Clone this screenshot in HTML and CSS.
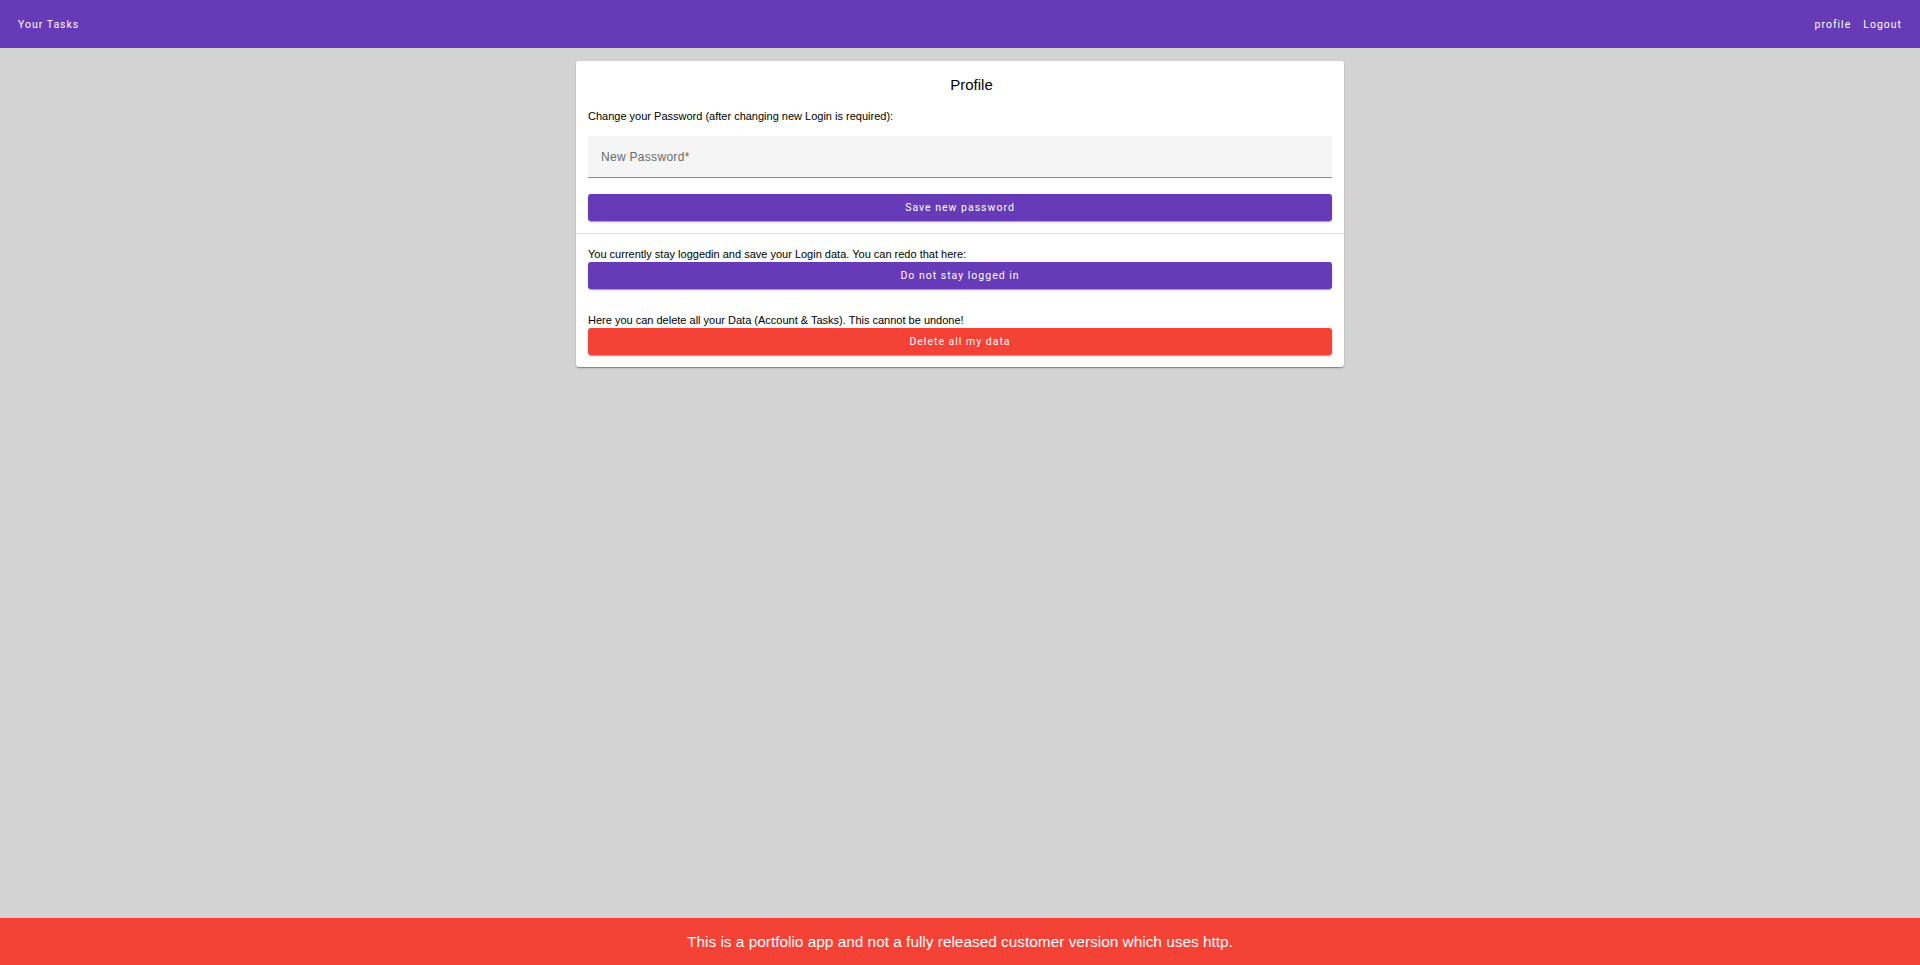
FILE: index.html
```html
<!DOCTYPE html>
<html lang="en">
<head>
<meta charset="utf-8">
<title>Your Tasks - Profile</title>
<link rel="stylesheet" href="styles.css">
</head>
<body>
<div class="page">
  <header class="toolbar">
    <span class="nav-btn brand">Your Tasks</span>
    <span class="spacer"></span>
    <span class="nav-btn">profile</span>
    <span class="nav-btn">Logout</span>
  </header>
  <main class="main">
    <section class="card">
      <div class="section">
        <h1 class="title">Profile</h1>
        <p class="text text-first">Change your Password (after changing new Login is required):</p>
        <div class="field">
          <span class="placeholder">New Password*</span>
        </div>
        <button class="btn btn-primary btn-save">Save new password</button>
      </div>
      <hr class="divider">
      <div class="section section-second">
        <p class="text">You currently stay loggedin and save your Login data. You can redo that here:</p>
        <button class="btn btn-primary">Do not stay logged in</button>
        <p class="text text-gap">Here you can delete all your Data (Account &amp; Tasks). This cannot be undone!</p>
        <button class="btn btn-warn">Delete all my data</button>
      </div>
    </section>
  </main>
  <footer class="footer">This is a portfolio app and not a fully released customer version which uses http.</footer>
</div>
</body>
</html>
```

FILE: styles.css
```css
* { box-sizing: border-box; }

html, body {
  margin: 0;
  padding: 0;
  height: 100%;
}

body {
  background: #d3d3d3;
  font-family: "Liberation Sans", Arial, sans-serif;
  color: #000;
}

.page {
  display: flex;
  flex-direction: column;
  height: 100vh;
}

.toolbar {
  height: 48px;
  flex: 0 0 48px;
  background: #673ab7;
  color: #fff;
  display: flex;
  align-items: center;
  padding: 0 12px;
}

.nav-btn {
  padding: 0 6px;
  font-family: Roboto, "Liberation Sans", sans-serif;
  font-weight: 400;
  font-size: 10.5px;
  letter-spacing: 1px;
  line-height: 27px;
}

.spacer { flex: 1; }

.main {
  flex: 1;
  display: flex;
  flex-direction: column;
  align-items: center;
}

.card {
  width: 768px;
  margin-top: 13px;
  background: #fff;
  border-radius: 3px;
  box-shadow: 0 2px 1px -1px rgba(0,0,0,.2), 0 1px 1px 0 rgba(0,0,0,.14), 0 1px 3px 0 rgba(0,0,0,.12);
  padding: 0 0 12px;
}

.section {
  padding: 15px 12px 12px;
  display: flex;
  flex-direction: column;
}

.section-second {
  padding: 14px 12px 0;
}

.title {
  margin: 0;
  font-size: 15px;
  font-weight: 400;
  line-height: 18px;
  text-align: center;
  padding-left: 23px;
}

.text {
  margin: 0 0 2px;
  font-size: 11px;
  line-height: 12px;
}

.text-first {
  margin-top: 16px;
  margin-bottom: 14px;
}

.text-gap {
  margin-top: 25px;
}

.field {
  height: 42px;
  background: #f5f5f5;
  border-bottom: 1px solid #8c8c8c;
  border-radius: 3px 3px 0 0;
  display: flex;
  align-items: center;
  padding: 0 13px;
}

.placeholder {
  font-size: 12px;
  letter-spacing: 0.3px;
  color: #6b6b6b;
}

.btn {
  display: block;
  width: 100%;
  height: 27px;
  border: 0;
  border-radius: 3px;
  color: #fff;
  font-family: Roboto, "Liberation Sans", sans-serif;
  font-weight: 400;
  font-size: 10.5px;
  letter-spacing: 1px;
  box-shadow: 0 2px 1px -1px rgba(0,0,0,.2), 0 1px 1px 0 rgba(0,0,0,.14), 0 1px 4px 0 rgba(0,0,0,.12);
  padding: 0;
}

.btn-save { margin-top: 16px; }

.btn-primary { background: #673ab7; }
.btn-warn { background: #f44336; }

.divider {
  margin: 0;
  border: 0;
  border-top: 1px solid #e0e0e0;
}

.footer {
  height: 47px;
  flex: 0 0 47px;
  background: #f44336;
  color: #fff;
  display: flex;
  align-items: center;
  justify-content: center;
  font-size: 15.4px;
}
```
